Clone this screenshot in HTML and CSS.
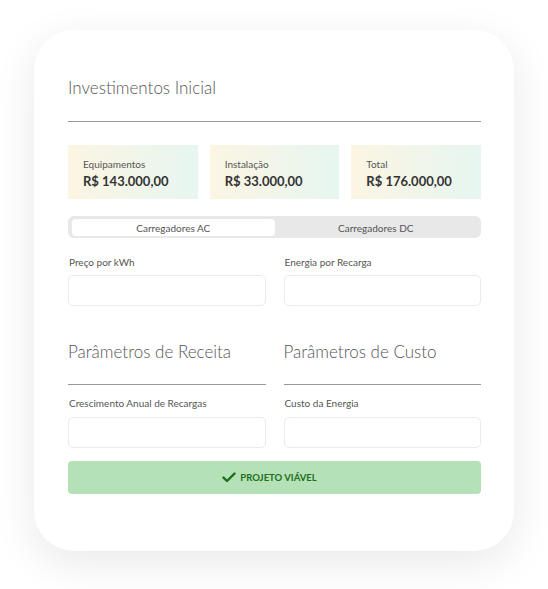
FILE: index.html
```html
<!DOCTYPE html>
<html>
<head>
    <title>Investimentos</title>
    <link rel="stylesheet" href="styles.css">
</head>
<body>
    <div class="card">
        <h2 class="section-title">Investimentos Inicial</h2>

        <div class="stats">
            <div class="stat">
                <p class="stat-label">Equipamentos</p>
                <p class="stat-value">R$ 143.000,00</p>
            </div>
            <div class="stat">
                <p class="stat-label">Instalação</p>
                <p class="stat-value">R$ 33.000,00</p>
            </div>
            <div class="stat">
                <p class="stat-label">Total</p>
                <p class="stat-value">R$ 176.000,00</p>
            </div>
        </div>

        <div class="tabs">
            <button class="tab active">Carregadores AC</button>
            <button class="tab">Carregadores DC</button>
        </div>

        <div class="row fields">
            <div class="field">
                <label>Preço por kWh</label>
                <input type="text">
            </div>
            <div class="field">
                <label>Energia por Recarga</label>
                <input type="text">
            </div>
        </div>

        <div class="row">
            <h2 class="section-title sub">Parâmetros de Receita</h2>
            <h2 class="section-title sub">Parâmetros de Custo</h2>
        </div>

        <div class="row fields second">
            <div class="field">
                <label>Crescimento Anual de Recargas</label>
                <input type="text">
            </div>
            <div class="field">
                <label>Custo da Energia</label>
                <input type="text">
            </div>
        </div>

        <div class="status">
            <svg width="14" height="11" viewBox="0 0 14 11">
                <path d="M1.5 5.6 L5 9 L12.5 1.6" fill="none" stroke="#1f6e22" stroke-width="2.4" stroke-linecap="round" stroke-linejoin="round"/>
            </svg>
            <span>Projeto viável</span>
        </div>
    </div>
</body>
</html>
```

FILE: styles.css
```css
body {
    margin: 0;
    padding: 30px 0 38px 34px;
    background-color: #fff;
    font-family: Lato, "Open Sans", sans-serif;
    color: #333;
}
.card {
    box-sizing: border-box;
    width: 480px;
    height: 521px;
    padding: 47px 33px 0 34px;
    background-color: #fff;
    border-radius: 40px;
    box-shadow: 0 12px 44px rgba(0,0,0,0.09);
}
.section-title {
    margin: 0;
    padding-bottom: 22px;
    border-bottom: 1px solid #999;
    font-size: 17px;
    line-height: 22px;
    font-weight: 300;
    color: #555;
}
.section-title.sub {
    flex: 1;
    margin-top: 35px;
    padding-bottom: 21px;
}
.stats {
    display: flex;
    gap: 12px;
    margin-top: 23px;
}
.stat {
    flex: 1;
    padding: 13px 15px 9px;
    background: linear-gradient(90deg, #fcf5e3, #e6f6f0);
}
.stat p {
    margin: 0;
}
.stat-label {
    font-size: 10px;
    line-height: 13px;
    color: #555;
    margin-bottom: 2px !important;
}
.stat-value {
    font-size: 13px;
    line-height: 17px;
    font-weight: 700;
    color: #333;
}
.tabs {
    display: flex;
    margin-top: 17px;
    padding: 3px 4px 2px;
    background-color: #e8e8e8;
    border-radius: 6px;
}
.tab {
    flex: 1;
    height: 17px;
    padding: 0;
    border: none;
    border-radius: 4px;
    background: none;
    font-family: inherit;
    font-size: 10px;
    color: #555;
}
.tab.active {
    background-color: #fff;
}
.row {
    display: flex;
    gap: 18px;
}
.fields {
    margin-top: 18px;
}
.fields.second {
    margin-top: 12px;
}
.field {
    flex: 1;
    display: flex;
    flex-direction: column;
}
.field label {
    font-size: 10px;
    line-height: 13px;
    color: #555;
    margin-left: 1px;
    margin-bottom: 6px;
}
.fields.second label {
    margin-bottom: 7px;
}
.field input {
    box-sizing: border-box;
    height: 31px;
    border: 1px solid #ebebeb;
    border-radius: 5px;
    background: #fff;
}
.status {
    display: flex;
    align-items: center;
    justify-content: center;
    gap: 4px;
    height: 33px;
    margin-top: 13px;
    padding-right: 10px;
    background-color: #b4e1b6;
    border-radius: 4px;
    font-size: 9.5px;
    font-weight: 700;
    text-transform: uppercase;
    color: #1f6e22;
}
```
